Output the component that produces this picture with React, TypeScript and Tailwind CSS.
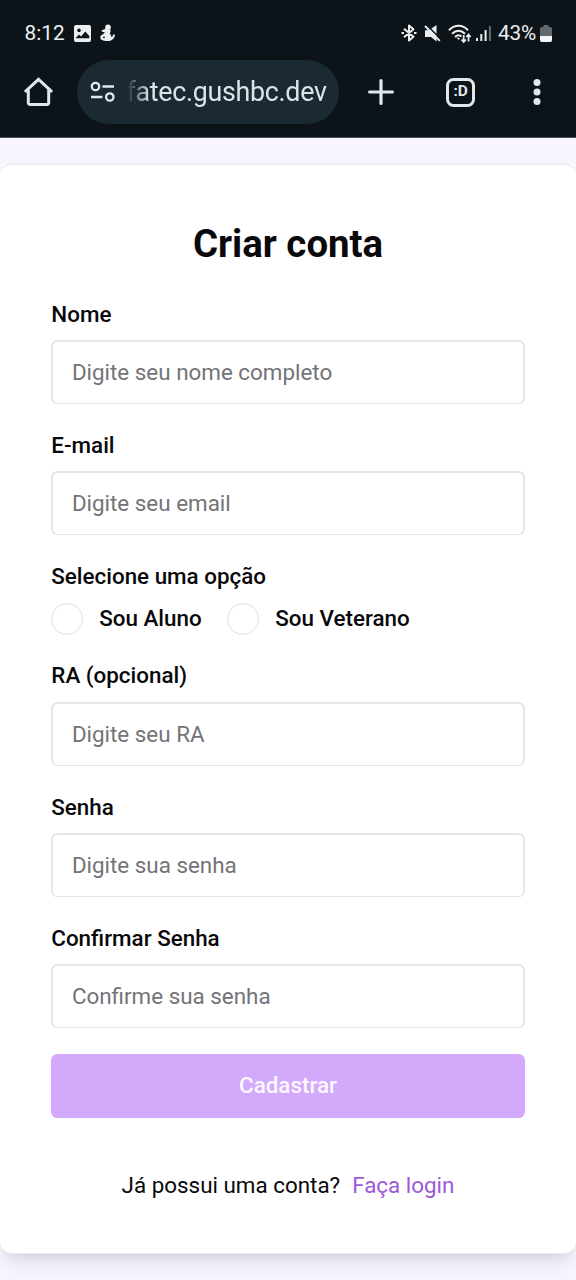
import React from "react";

function StatusBar() {
  return (
    <div className="flex h-[60px] items-center pt-[6px] pl-[24.500px] pr-[24px] text-[#eceff1]">
      <span className="w-[40px] whitespace-nowrap text-[20.8px] leading-6">8:12</span>
      <svg className="ml-[9px] h-[17px] w-[17px]" viewBox="0 0 17 17">
        <path
          fill="currentColor"
          fillRule="evenodd"
          d="M2 0h13a2 2 0 0 1 2 2v13a2 2 0 0 1-2 2H2a2 2 0 0 1-2-2V2a2 2 0 0 1 2-2zM5 3.500a1.800 1.800 0 1 0 .01 0zM1.700 13.300h13.600v-2.300l-4-4.500-4.300 5-2-2-3.300 3.600z"
        />
      </svg>
      <svg className="ml-[9px] h-[18px] w-[15px]" viewBox="0 0 15 18" fill="currentColor">
        <circle cx="8" cy="3.400" r="2.800" />
        <path d="M1.500 6.500 6 4.500l4.200 1c1 2-.2 3.300-.5 4.200 1.200.8 1.700 2 1.500 3.300 1.200-.2 1.600-1 1.900-2.500l1.900.1c-.3 3-1.700 4.800-3.600 5.600-3 1.400-6.700 1-9.200-.2C.2 15.300-.2 13.200.8 11.800c1.200-1.500 2.900-1.500 4-3.600L2 7.700z" />
        <path d="m2.300 13.500 2.200-1.200.3 2z" fill="#0c141a" />
      </svg>
      <div className="ml-auto flex items-center">
        <svg className="h-[18px] w-[16px]" viewBox="0 0 16 18" fill="none" stroke="currentColor" strokeWidth="2" strokeLinejoin="round">
          <path d="m3 4.700 9.500 8.100L8 16.500v-15l4.500 3.700L3 13.300" />
          <path d="M.5 9H3M13 9h2.500" />
        </svg>
        <svg className="ml-[7px] h-[17px] w-[17px]" viewBox="0 0 17 17" fill="currentColor">
          <path d="M1 5.300h4l7.500-5.300v16.500L7 12H1z" />
          <path d="m2.700 0 14.300 14.300" stroke="#0c141a" strokeWidth="1.500" />
          <path d="m1 1 14.800 14.800" stroke="currentColor" strokeWidth="1.900" />
        </svg>
        <svg className="ml-[7px] h-[19px] w-[24px]" viewBox="0 0 24 19" fill="none" stroke="currentColor" strokeWidth="2">
          <path d="M1 6.300c5.600-6 13.500-6 19 0M4 9.800c4.200-4.100 9-4.100 13 0M7 13c2.300-2.200 4.600-2.200 6.500-.5" />
          <path d="M8.500 13.500 10.500 16l1.500-2z" fill="currentColor" stroke="none" />
          <path strokeWidth="1.700" d="M15.700 11v7m-2.200-2.500 2.200 2.500 2.200-2.500M20.500 17.500v-7m-2.200 2.500 2.200-2.500 2.200 2.500" />
        </svg>
        <svg className="ml-[4px] h-[16px] w-[16px]" viewBox="0 0 16 16" fill="currentColor">
          <path d="M0 13h2v3H0zM4.300 9h2v7h-2zM8.600 5h2v11h-2z" />
          <path d="M12.900 1h2v15h-2z" opacity=".4" />
        </svg>
        <span className="ml-[6.500px] w-[40.500px] whitespace-nowrap text-[20.800px] leading-6 tracking-[-0.2px]">43%</span>
        <svg className="ml-[1.500px] h-[17px] w-[12px]" viewBox="0 0 12 17">
          <path d="M3.500 0h5v2H10a2 2 0 0 1 2 2v11a2 2 0 0 1-2 2H2a2 2 0 0 1-2-2V4a2 2 0 0 1 2-2h1.500z" fill="#64696e" />
          <path d="M0 11h12v4a2 2 0 0 1-2 2H2a2 2 0 0 1-2-2z" fill="#f4f6f7" />
        </svg>
      </div>
    </div>
  );
}

function BrowserBar() {
  return (
    <div className="flex h-[64px] items-center pl-[24px] text-[#e1e8ed]">
      <svg className="h-[30px] w-[29px]" viewBox="0 0 29 30" fill="none" stroke="currentColor" strokeWidth="3">
        <path d="M.9 15 14.500 2.400 28.100 15M4.300 12v13.700a1.700 1.700 0 0 0 1.700 1.700h17a1.700 1.700 0 0 0 1.700-1.700V12" />
      </svg>
      <div className="ml-[24px] flex h-[64px] w-[262px] items-center rounded-full bg-[#1b2932] pl-[13px]">
        <svg className="h-[22px] w-[25px]" viewBox="0 0 25 22" fill="none" stroke="currentColor" strokeWidth="2.300">
          <circle cx="5.500" cy="5.500" r="3.700" />
          <circle cx="19.800" cy="16" r="3.700" />
          <path d="M12.500 5.500H24M1 16h11.500" />
        </svg>
        <div className="ml-[11.500px] w-[204px] whitespace-nowrap text-[26.800px] leading-8 tracking-[-0.28px] text-[#dce4e9] [mask-image:linear-gradient(to_right,transparent_0px,black_22px)]">
          fatec.gushbc.dev
        </div>
      </div>
      <svg className="ml-[29px] h-[26px] w-[26px]" viewBox="0 0 26 26" stroke="currentColor" strokeWidth="3.200" strokeLinecap="round">
        <path d="M13 1.600v22.800M1.600 13h22.800" />
      </svg>
      <div className="ml-[52px] flex h-[29px] w-[29px] items-center justify-center rounded-[7.500px] border-[3px] border-[#e1e8ed] text-[15.500px] leading-none font-bold tracking-[-0.3px]">
        :D
      </div>
      <svg className="ml-[58px] h-[26px] w-[8px]" viewBox="0 0 8 26" fill="currentColor">
        <circle cx="4" cy="3.500" r="3.500" />
        <circle cx="4" cy="13" r="3.500" />
        <circle cx="4" cy="22.500" r="3.500" />
      </svg>
    </div>
  );
}

function Label({ children }: { children: React.ReactNode }) {
  return <div className="h-[28px] pl-[0.3px] text-[22.4px] leading-[28px] font-medium whitespace-nowrap">{children}</div>;
}

function Field({ label, placeholder, type = "text" }: { label: string; placeholder: string; type?: string }) {
  return (
    <label className="block">
      <Label>{label}</Label>
      <input
        type={type}
        placeholder={placeholder}
        className="mt-[12.2px] block h-[64px] w-full rounded-[6.4px] border-2 border-b border-[#e6e6e9] bg-white pb-px pl-[18.9px] text-[22.4px] placeholder:text-[#737378]"
      />
    </label>
  );
}

function Choice({ label }: { label: string }) {
  return (
    <label className="flex items-center gap-[16px] text-[22.4px] leading-[32px] font-medium">
      <input type="radio" name="role" className="h-[32px] w-[32px] appearance-none rounded-full border-[1.6px] border-[#dedee2]" />
      <span className="-mt-[2px] -mr-[0.2px] pl-[0.2px]">{label}</span>
    </label>
  );
}

export default function App() {
  return (
    <div className="flex h-[1280px] w-[576px] flex-col overflow-hidden bg-[#f9f5ff] font-[Roboto,sans-serif] text-[#09090b]">
      <header className="h-[138px] shrink-0 border-b-[1px] border-[#4b4e55] bg-[#0c141a]">
        <StatusBar />
        <BrowserBar />
      </header>
      <main className="mt-[25px] h-[1091px] shrink-0 rounded-[12.8px] border-t-2 border-b border-[#eeebf3] bg-white px-[51px] shadow-[0_14px_20px_-5px_rgb(0_0_0/0.1),0_6px_8px_-6px_rgb(0_0_0/0.1)]">
        <h1 className="mt-[53.500px] h-[50px] text-center text-[38.4px] leading-[50px] font-bold">Criar conta</h1>
        <form className="mt-[31px] flex flex-col gap-[27px]">
          <Field label="Nome" placeholder="Digite seu nome completo" />
          <Field label="E-mail" placeholder="Digite seu email" />
          <div>
            <Label>Selecione uma opção</Label>
            <div className="mt-[12.700px] -mb-[0.200px] flex h-[32px] gap-[25.6px]">
              <Choice label="Sou Aluno" />
              <Choice label="Sou Veterano" />
            </div>
          </div>
          <Field label="RA (opcional)" placeholder="Digite seu RA" />
          <Field label="Senha" placeholder="Digite sua senha" type="password" />
          <Field label="Confirmar Senha" placeholder="Confirme sua senha" type="password" />
          <button type="button" className="-mt-[1.4px] h-[64px] rounded-[6.4px] bg-[#d3a9fb] text-[22.4px] font-medium text-[#fdf8ff]">
            Cadastrar
          </button>
        </form>
        <p className="mt-[51.5px] flex justify-center gap-[12px] text-[22.4px] leading-[32px]">
          <span>Já possui uma conta?</span>
          <a className="text-[#9c59d9]">Faça login</a>
        </p>
      </main>
    </div>
  );
}
